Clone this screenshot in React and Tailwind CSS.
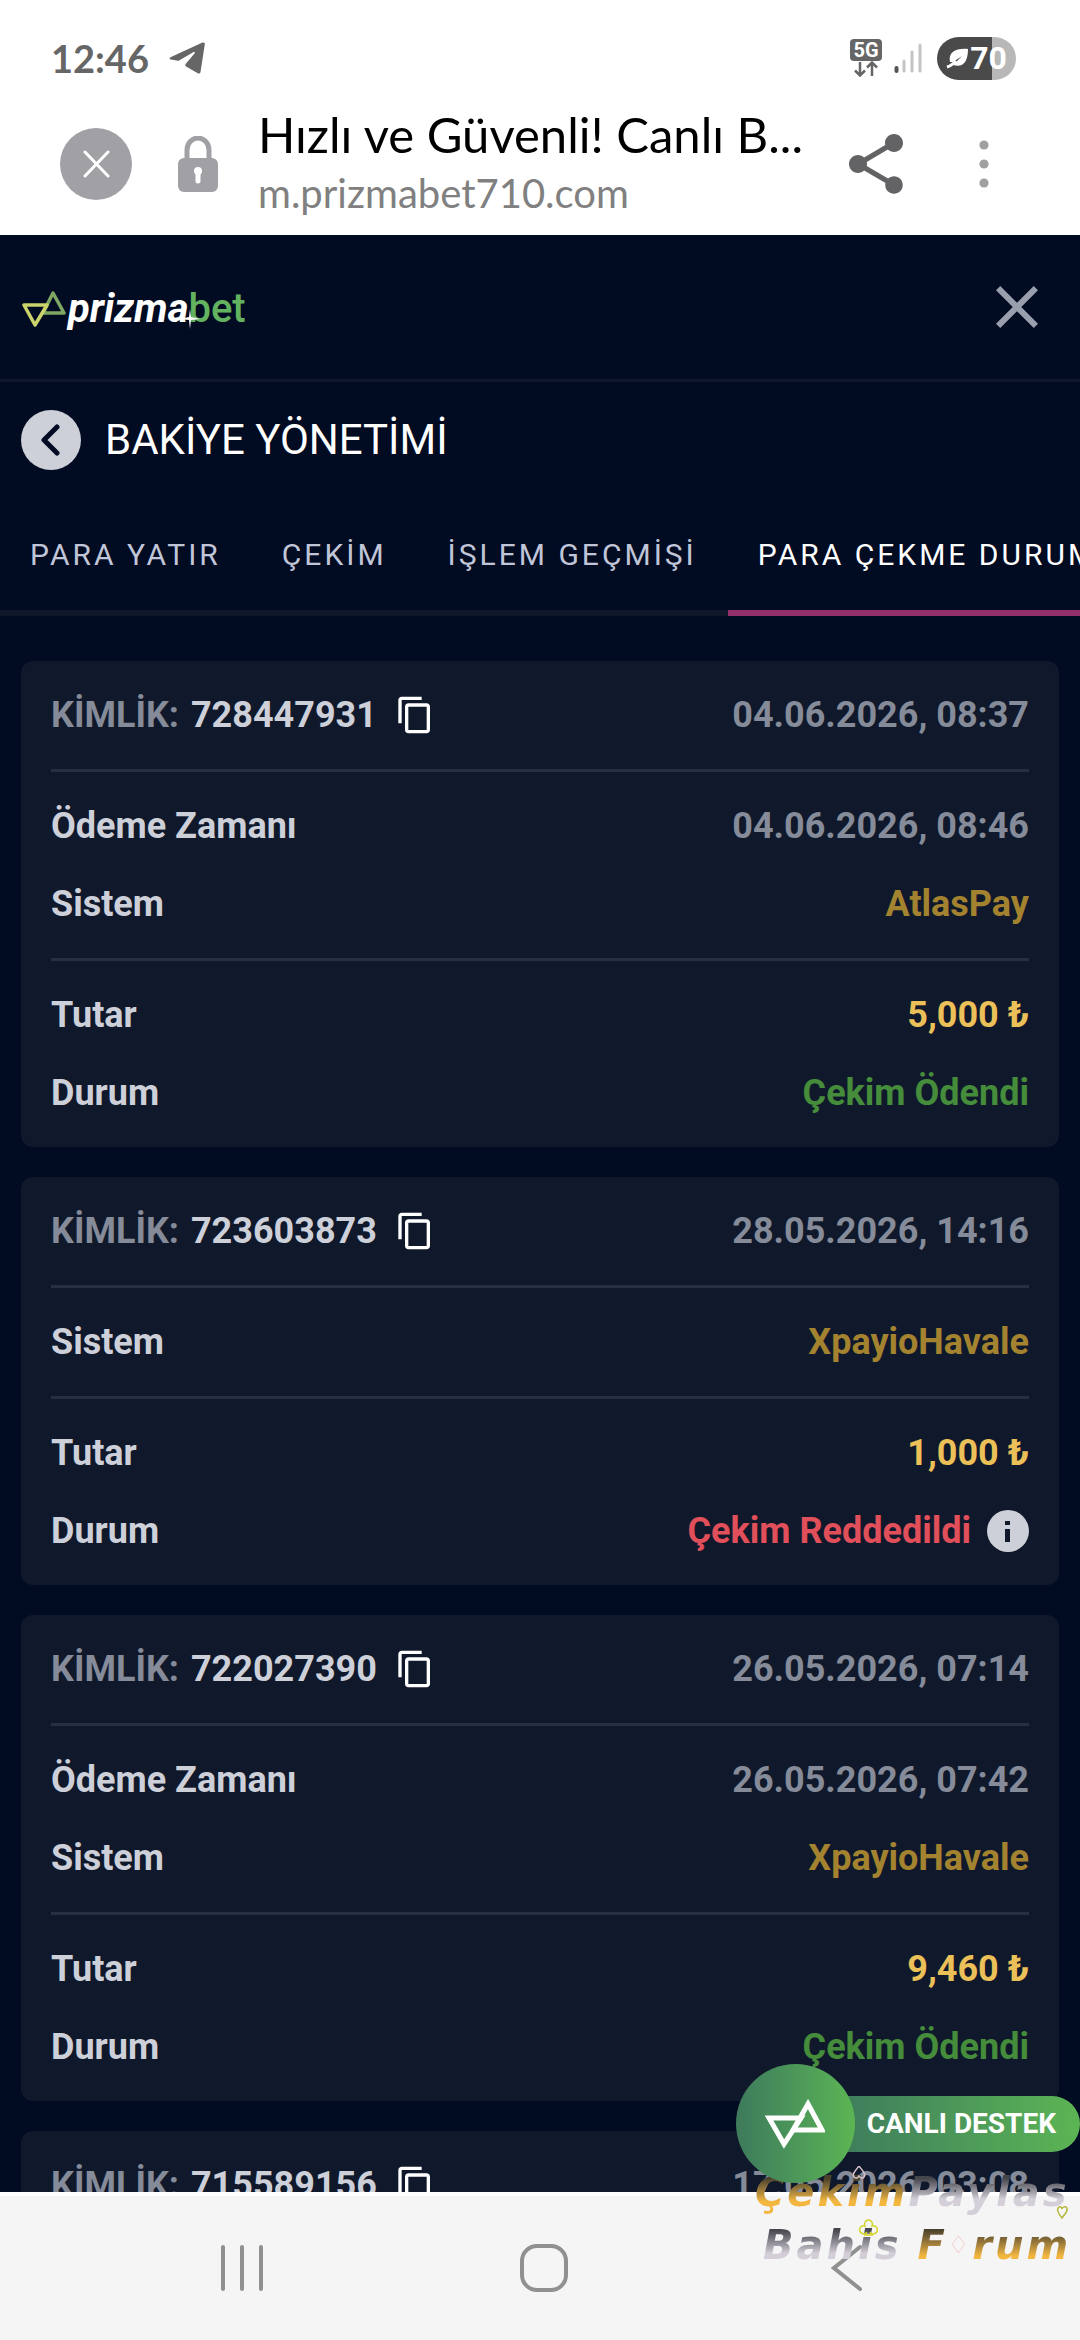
import { MdClose, MdContentCopy, MdShare } from 'react-icons/md';

const tabs = ['PARA YATIR', 'ÇEKİM', 'İŞLEM GEÇMİŞİ', 'PARA ÇEKME DURUMU'];

const withdrawals = [
    { id: '728447931', created: '04.06.2026, 08:37', paid: '04.06.2026, 08:46', system: 'AtlasPay', amount: '5,000 ₺', ok: true },
    { id: '723603873', created: '28.05.2026, 14:16', system: 'XpayioHavale', amount: '1,000 ₺', ok: false },
    { id: '722027390', created: '26.05.2026, 07:14', paid: '26.05.2026, 07:42', system: 'XpayioHavale', amount: '9,460 ₺', ok: true },
    { id: '715589156', created: '17.05.2026, 03:08' },
];

const StatusBar = () => (
    <div className="flex h-[92px] items-center justify-between pt-6 pl-[51px] pr-16">
        <div className="flex items-center gap-5">
            <span className="text-[38px] leading-none font-bold text-[#666]">12:46</span>
            <svg viewBox="0 0 36 32" className="h-8 w-9" fill="#666">
                <path d="M2 15 33.500.6C35 0 36 .8 35.800 2.200L31.600 29.500C31.300 31.600 30 32 28.400 31L17.500 24.800C16 23.900 16 22.700 17 21.600L25.500 11.600C26.300 10.300 25.400 9.700 24.200 10.300L10.500 18.200C9.500 18.800 8.500 18.900 7.500 18.600L2 17.600C.2 17.200 0 15.800 2 15Z" />
            </svg>
        </div>
        <div className="flex items-center">
            <div className="mr-3 flex w-8 flex-col items-center">
                <span className="w-8 rounded-sm bg-[#666] text-center font-['Roboto',sans-serif] text-xl leading-[22px] font-bold text-white">5G</span>
                <svg viewBox="0 0 24 16" className="h-4 w-6" fill="none" stroke="#666" strokeWidth="2.500">
                    <path d="M6 1v13M1 9.500l5 5 5-5M18 15V2M13 6.500l5-5 5 5" />
                </svg>
            </div>
            <svg viewBox="0 0 28 30" className="mr-[15px] h-[30px] w-7" strokeWidth="3" strokeLinecap="round">
                <path d="M2.500 25v3" stroke="#555" strokeWidth="4" />
                <path d="M10 18v10M18 9v19M26 2v26" stroke="#c4c4c4" />
            </svg>
            <div className="flex h-[43px] w-[79px] items-center justify-center rounded-full bg-linear-to-r from-[#4a4a4a] from-70% to-[#b8b8b8] to-70%">
                <svg viewBox="0 0 24 22" className="h-[22px] w-6" fill="#fff">
                    <path d="M4 15C2 5 10 1 22 2c0 13-5 19-15 16l9-9-9 6Z" />
                    <path d="M1 20c4-1 6-3 9-6" stroke="#fff" strokeWidth="3" fill="none" />
                </svg>
                <span className="font-['Roboto',sans-serif] text-[32px] leading-none font-bold text-white">70</span>
            </div>
        </div>
    </div>
);

const BrowserBar = () => (
    <div className="flex h-[143px] items-center pl-[60px] pr-[66px]">
        <button aria-label="Kapat" className="flex size-[72px] shrink-0 items-center justify-center rounded-full bg-[#a1a0a5]">
            <svg viewBox="0 0 28 28" className="size-7" stroke="#fff" strokeWidth="3" strokeLinecap="round">
                <path d="m3 2 23 24M26 2 3 26" />
            </svg>
        </button>
        <svg viewBox="0 0 40 56" className="mx-[46px] mr-10 h-14 w-10 shrink-0">
            <path d="M9 26V14a11 12 0 0 1 22 0v12" fill="none" stroke="#a1a0a5" strokeWidth="5" />
            <rect y="22" width="40" height="34" rx="6" fill="#a1a0a5" />
            <circle cx="20" cy="35" r="4" fill="#fff" />
            <path d="M20 36v9" stroke="#fff" strokeWidth="5" strokeLinecap="round" />
        </svg>
        <div className="min-w-0 flex-1 whitespace-nowrap">
            <p className="text-[49px] leading-[58px] text-black">Hızlı ve Güvenli! Canlı B...</p>
            <p className="text-[40px] leading-[60px] text-[#808080]">m.prizmabet710.com</p>
        </div>
        <button aria-label="Paylaş" className="shrink-0">
            <MdShare className="size-[72px] text-[#636366]" />
        </button>
        <button aria-label="Menü" className="ml-[42px] flex w-[60px] shrink-0 justify-center">
            <svg viewBox="0 0 10 48" className="h-12 w-2.5" fill="#a0a0a0">
                <circle cx="5" cy="5" r="4.600" />
                <circle cx="5" cy="24" r="4.600" />
                <circle cx="5" cy="43" r="4.600" />
            </svg>
        </button>
    </div>
);

const Logo = () => (
    <a href="#" className="flex items-center gap-0.5 pt-1" aria-label="prizmabet">
        <svg viewBox="0 0 44 38" className="h-[38px] w-11" fill="none" strokeWidth="3.500" strokeLinejoin="round">
            <path d="M31 3 42 23H21Z" stroke="#7fa763" />
            <path d="M2 15h23L13 35Z" stroke="#cbd36b" />
        </svg>
        <span className="flex text-[40px] leading-none">
            <span className="font-bold text-white italic">prizma</span>
            <span className="relative font-medium text-[#62b25f]">
                bet
                <svg viewBox="0 0 20 20" className="absolute -left-2 bottom-0 size-5" fill="#fff">
                    <path d="M10 0l1 8 9 2-9 1-1 9-1-9-9-1 9-2Z" />
                </svg>
            </span>
        </span>
    </a>
);

const Row = ({ label, children }) => (
    <div className="flex h-12 items-center justify-between">
        <span className="text-[#cdd0d9]">{label}</span>
        {children}
    </div>
);

const WithdrawalCard = ({ item }) => (
    <article className="shrink-0 divide-y-[3px] divide-[#282f40] rounded-xl bg-[#10192b] px-[30px] text-4xl leading-[48px] font-bold">
        <div className="flex items-center justify-between py-[30px]">
            <div className="flex items-center">
                <span className="text-[#858b99]">KİMLİK:</span>
                <span className="ml-3 text-[#cdd0d9]">{item.id}</span>
                <button aria-label="Kopyala" className="ml-[18px]">
                    <MdContentCopy className="size-10 text-white" />
                </button>
            </div>
            <span className="text-[#858b99]">{item.created}</span>
        </div>
        {item.system && (
            <div className="flex flex-col gap-[30px] py-[30px]">
                {item.paid && (
                    <Row label="Ödeme Zamanı">
                        <span className="text-[#858b99]">{item.paid}</span>
                    </Row>
                )}
                <Row label="Sistem">
                    <span className="text-[#a3832f]">{item.system}</span>
                </Row>
            </div>
        )}
        {item.amount && (
            <div className="flex flex-col gap-[30px] py-[30px]">
                <Row label="Tutar">
                    <span className="text-[#ecc058]">{item.amount}</span>
                </Row>
                <Row label="Durum">
                    {item.ok ? (
                        <span className="text-[#458c3b]">Çekim Ödendi</span>
                    ) : (
                        <span className="flex items-center gap-4 text-[#e04f5a]">
                            Çekim Reddedildi
                            <button aria-label="Bilgi">
                                <svg viewBox="0 0 42 42" className="size-[42px]">
                                    <circle cx="21" cy="21" r="21" fill="#cdd0d9" />
                                    <path d="M18 11h5v4h-5zM18 19h5v13h-5z" fill="#10192b" />
                                </svg>
                            </button>
                        </span>
                    )}
                </Row>
            </div>
        )}
    </article>
);

const LiveSupport = () => (
    <button className="absolute right-0 bottom-[157px] flex items-center">
        <span className="z-10 flex size-[119px] items-center justify-center rounded-full bg-linear-to-r from-[#3d7a5b] to-[#5cb553]">
            <svg viewBox="0 0 60 50" className="h-[50px] w-[60px]" fill="none" stroke="#fff" strokeWidth="5">
                <path d="M4 19h32L19 45ZM43 5 57 31H28Z" />
            </svg>
        </span>
        <span className="-ml-6 flex h-14 items-center rounded-r-full bg-linear-to-r from-[#3d7a5b] to-[#5cb553] pr-6 pl-9 text-[28px] font-bold text-white">
            CANLI DESTEK
        </span>
    </button>
);

const gold = 'bg-linear-to-b from-[#4a412b] from-20% to-[#f3b740] to-70% bg-clip-text text-transparent';
const silver = 'bg-linear-to-b from-[#45454c] from-20% to-[#d3ced8] to-65% bg-clip-text text-transparent';

const ForumMark = () => (
    <div className="pointer-events-none absolute right-0 bottom-[68px] w-[325px] font-['DejaVu_Sans',sans-serif] text-[40px] leading-[53px] font-bold tracking-[3px] whitespace-nowrap italic">
        <p>
            <span className={gold}>Çekim</span>
            <span className={silver}>Paylas</span>
        </p>
        <p className="flex gap-4 pl-2">
            <span className={silver}>Bahis</span>
            <span className="flex">
                <span className={gold}>F</span>
                <span className="text-2xl leading-[53px] font-normal text-[#f0c8c8] not-italic">♢</span>
                <span className={gold}>rum</span>
            </span>
        </p>
        <svg viewBox="0 0 325 106" className="absolute top-0 left-0 h-[106px] w-[325px]" fill="none" strokeWidth="1.500">
            <path d="M104 0c-4 5-7 8-5 11 2 2 4 1 5-1 1 2 4 3 5 1 2-3-1-6-5-11Z" stroke="#d9c4cc" />
            <path d="M110 60a4 4 0 1 1 7 0 4 4 0 1 1-2 6l2 3h-7l2-3a4 4 0 1 1-2-6Z" stroke="#d2d528" />
            <path d="M307 52c-4-5-6-9-3-11 2-1 3 1 3 2 0-1 2-3 4-2 3 2 0 6-4 11Z" stroke="#b5b83a" />
        </svg>
    </div>
);

const SystemNav = () => (
    <nav className="grid h-[148px] shrink-0 grid-cols-3 items-center justify-items-center border-t-4 border-white bg-[#f5f5f5] pr-[82px] pl-[91px]">
        <button aria-label="Son uygulamalar">
            <svg viewBox="0 0 44 48" className="h-12 w-11" stroke="#909090" strokeWidth="4" strokeLinecap="round">
                <path d="M3 3v42M22 3v42M41 3v42" />
            </svg>
        </button>
        <button aria-label="Ana ekran">
            <svg viewBox="0 0 48 48" className="size-12" fill="none" stroke="#909090" strokeWidth="4">
                <rect x="2" y="2" width="44" height="44" rx="15" />
            </svg>
        </button>
        <button aria-label="Geri">
            <svg viewBox="0 0 32 48" className="h-12 w-8" fill="none" stroke="#909090" strokeWidth="4" strokeLinecap="round">
                <path d="M29 3 3 24l26 21" />
            </svg>
        </button>
    </nav>
);

export default function App() {
    return (
        <div className="relative flex h-screen flex-col overflow-hidden bg-[#010b22] font-['Roboto',sans-serif]">
            <header className="shrink-0 bg-white font-['Lato',sans-serif]">
                <StatusBar />
                <BrowserBar />
            </header>
            <main className="flex min-h-0 flex-1 flex-col overflow-hidden">
                <div className="flex h-[147px] shrink-0 items-center justify-between border-b-[3px] border-[#0f182a] pr-[27px] pl-[22px]">
                    <Logo />
                    <button aria-label="Kapat">
                        <MdClose className="size-[72px] text-[#9a9fad]" />
                    </button>
                </div>
                <div className="flex shrink-0 items-center gap-6 px-[21px] py-7">
                    <button aria-label="Geri" className="flex size-[60px] items-center justify-center rounded-full bg-[#cdd0d9]">
                        <svg viewBox="0 0 20 32" className="h-8 w-5" fill="none" stroke="#010b22" strokeWidth="5" strokeLinecap="round" strokeLinejoin="round">
                            <path d="M16 3 3 16l13 13" />
                        </svg>
                    </button>
                    <h1 className="text-[42px] leading-[60px] text-white">BAKİYE YÖNETİMİ</h1>
                </div>
                <div role="tablist" className="flex h-[118px] shrink-0 overflow-hidden">
                    {tabs.map((tab, i) => (
                        <button
                            key={tab}
                            role="tab"
                            aria-selected={i === 3}
                            className={`shrink-0 border-b-6 pr-[31px] pl-[30px] text-[30px] tracking-[3px] whitespace-nowrap ${
                                i === 3 ? 'border-[#93306a] text-white' : 'border-[#0f182a] text-[#c0c6d8]'
                            }`}
                        >
                            {tab}
                        </button>
                    ))}
                </div>
                <div className="flex min-h-0 flex-1 flex-col gap-[30px] overflow-hidden px-[21px] pt-[45px]">
                    {withdrawals.map((item) => (
                        <WithdrawalCard key={item.id} item={item} />
                    ))}
                </div>
            </main>
            <SystemNav />
            <LiveSupport />
            <ForumMark />
        </div>
    );
}
